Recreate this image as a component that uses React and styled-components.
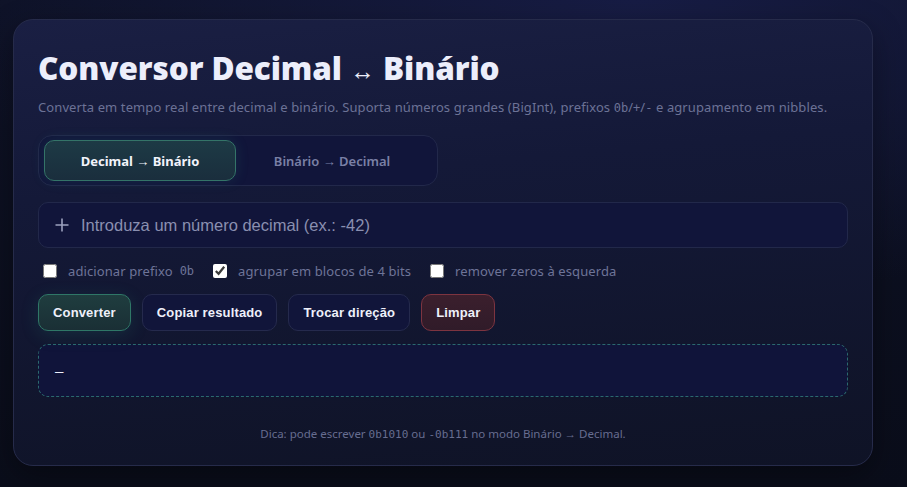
import { useState } from 'react'
import styled, { createGlobalStyle } from 'styled-components'

const GlobalStyle = createGlobalStyle`
  html, body {
    margin: 0;
    height: 100%;
  }
  body {
    background:
      radial-gradient(ellipse 700px 300px at 70% 0%, #171c44 0%, rgba(23, 28, 68, 0) 100%),
      linear-gradient(180deg, #0e1226 0%, #0a0d1a 100%);
    font-family: "Noto Sans", "Open Sans", sans-serif;
    color: #e6e8f6;
  }
`

const Page = styled.main`
  padding: 19px 34px 21px 13px;
`

const Card = styled.section`
  border: 1px solid #262b4a;
  border-radius: 20px;
  background: linear-gradient(175deg, #1a1f43 0%, #141938 35%, #0f1326 100%);
  padding: 27px 24px 24px 24px;
  box-shadow: 0 10px 30px rgba(0, 0, 0, 0.35);
`

const Title = styled.h1`
  margin: 0;
  font-family: "Noto Sans", sans-serif;
  font-weight: 900;
  font-size: 31.5px;
  line-height: 42px;
  letter-spacing: -0.1px;
  color: #eceefb;
`

const Arrow = styled.span`
  font-weight: 400;
  font-size: 25px;
`

const Subtitle = styled.p`
  margin: 7px 0 19px 0;
  font-size: 13px;
  letter-spacing: 0.1px;
  color: #6c7296;
`

const Code = styled.code`
  font-family: "DejaVu Sans Mono", monospace;
  font-size: ${p => p.$size || '12px'};
  letter-spacing: 0;
`

const Tabs = styled.div`
  box-sizing: border-box;
  display: flex;
  width: 400px;
  padding: 4px 5px;
  border: 1px solid #22284a;
  border-radius: 14px;
  background: #11153a;
`

const Tab = styled.button`
  flex: 0 0 192px;
  height: 41px;
  border-radius: 10px;
  border: 1px solid ${p => (p.$active ? '#347468' : 'transparent')};
  background: ${p => (p.$active ? 'linear-gradient(180deg, #1d3a45 0%, #1a2e3d 100%)' : 'transparent')};
  box-shadow: ${p => (p.$active ? '0 0 14px rgba(50, 160, 140, 0.15)' : 'none')};
  color: ${p => (p.$active ? '#f2f3fb' : '#7a80a6')};
  font-family: "Noto Sans", sans-serif;
  font-weight: ${p => (p.$active ? 700 : 600)};
  font-size: 13px;
  cursor: pointer;
`

const InputBox = styled.label`
  display: flex;
  align-items: center;
  gap: 10px;
  margin-top: 16px;
  height: 44px;
  padding: 0 16px;
  border: 1px solid #22284a;
  border-radius: 10px;
  background: #11153a;
`

const Input = styled.input`
  flex: 1;
  border: none;
  outline: none;
  background: transparent;
  color: #e6e8f6;
  font-family: "Liberation Sans", Arial, sans-serif;
  font-size: 16.5px;
  &::placeholder {
    color: #8a8fb0;
  }
`

const Options = styled.div`
  display: flex;
  align-items: center;
  gap: 19px;
  margin-top: 14px;
  padding-left: 5px;
`

const Option = styled.label`
  display: flex;
  align-items: center;
  gap: 7px;
  font-size: 13px;
  letter-spacing: 0.1px;
  color: #6e7498;
`

const Check = styled.input`
  width: 14px;
  height: 14px;
  margin: 0 4px 0 0;
  accent-color: #ffffff;
`

const Actions = styled.div`
  display: flex;
  gap: 11px;
  margin-top: 14px;
`

const variants = {
  primary: { bg: 'linear-gradient(180deg, #1f3d3f 0%, #1a2f35 100%)', border: '#2f7767', glow: '0 4px 18px rgba(40, 150, 120, 0.18)' },
  plain: { bg: '#11153a', border: '#252a4d', glow: 'none' },
  danger: { bg: 'linear-gradient(180deg, #3b1f2d 0%, #301b29 100%)', border: '#7d3440', glow: 'none' },
}

const Button = styled.button`
  height: 37px;
  padding: 0 14px;
  border-radius: 10px;
  border: 1px solid ${p => variants[p.$variant].border};
  background: ${p => variants[p.$variant].bg};
  box-shadow: ${p => variants[p.$variant].glow};
  color: #eef0fa;
  font-family: "Liberation Sans", Arial, sans-serif;
  font-weight: 700;
  font-size: 13px;
  letter-spacing: 0.15px;
  cursor: pointer;
`

const Output = styled.div`
  display: flex;
  align-items: center;
  margin-top: 13px;
  height: 51px;
  padding: 0 16px;
  border: 1px dashed #2b6a6e;
  border-radius: 10px;
  background: #10143a;
  font-family: "DejaVu Sans Mono", monospace;
  font-size: 14px;
  color: #eceefb;
`

const Hint = styled.p`
  margin: 29px 0 0 0;
  text-align: center;
  font-size: 11.5px;
  color: #676d90;
`

const PlusIcon = () => (
  <svg width="14" height="14" viewBox="0 0 14 14" fill="none" stroke="#9ca1be" strokeWidth="1.6">
    <path d="M7 0.5v13M0.5 7h13" />
  </svg>
)

const App = () => {
  const [mode, setMode] = useState('dec')
  const [value, setValue] = useState('')

  return (
    <>
      <GlobalStyle />
      <Page>
        <Card>
          <Title>Conversor Decimal <Arrow>↔</Arrow> Binário</Title>
          <Subtitle>
            Converta em tempo real entre decimal e binário. Suporta números grandes (BigInt), prefixos <Code>0b</Code>/<Code>+</Code>/<Code>-</Code> e agrupamento em nibbles.
          </Subtitle>

          <Tabs>
            <Tab $active={mode === 'dec'} onClick={() => setMode('dec')}>Decimal → Binário</Tab>
            <Tab $active={mode === 'bin'} onClick={() => setMode('bin')}>Binário → Decimal</Tab>
          </Tabs>

          <InputBox>
            <PlusIcon />
            <Input
              value={value}
              onChange={e => setValue(e.target.value)}
              placeholder="Introduza um número decimal (ex.: -42)"
            />
          </InputBox>

          <Options>
            <Option><Check type="checkbox" />adicionar prefixo <Code $size="12px">0b</Code></Option>
            <Option><Check type="checkbox" defaultChecked />agrupar em blocos de 4 bits</Option>
            <Option><Check type="checkbox" />remover zeros à esquerda</Option>
          </Options>

          <Actions>
            <Button $variant="primary">Converter</Button>
            <Button $variant="plain">Copiar resultado</Button>
            <Button $variant="plain">Trocar direção</Button>
            <Button $variant="danger" onClick={() => setValue('')}>Limpar</Button>
          </Actions>

          <Output>–</Output>

          <Hint>
            Dica: pode escrever <Code $size="11px">0b1010</Code> ou <Code $size="11px">-0b111</Code> no modo Binário → Decimal.
          </Hint>
        </Card>
      </Page>
    </>
  )
}

export default App
